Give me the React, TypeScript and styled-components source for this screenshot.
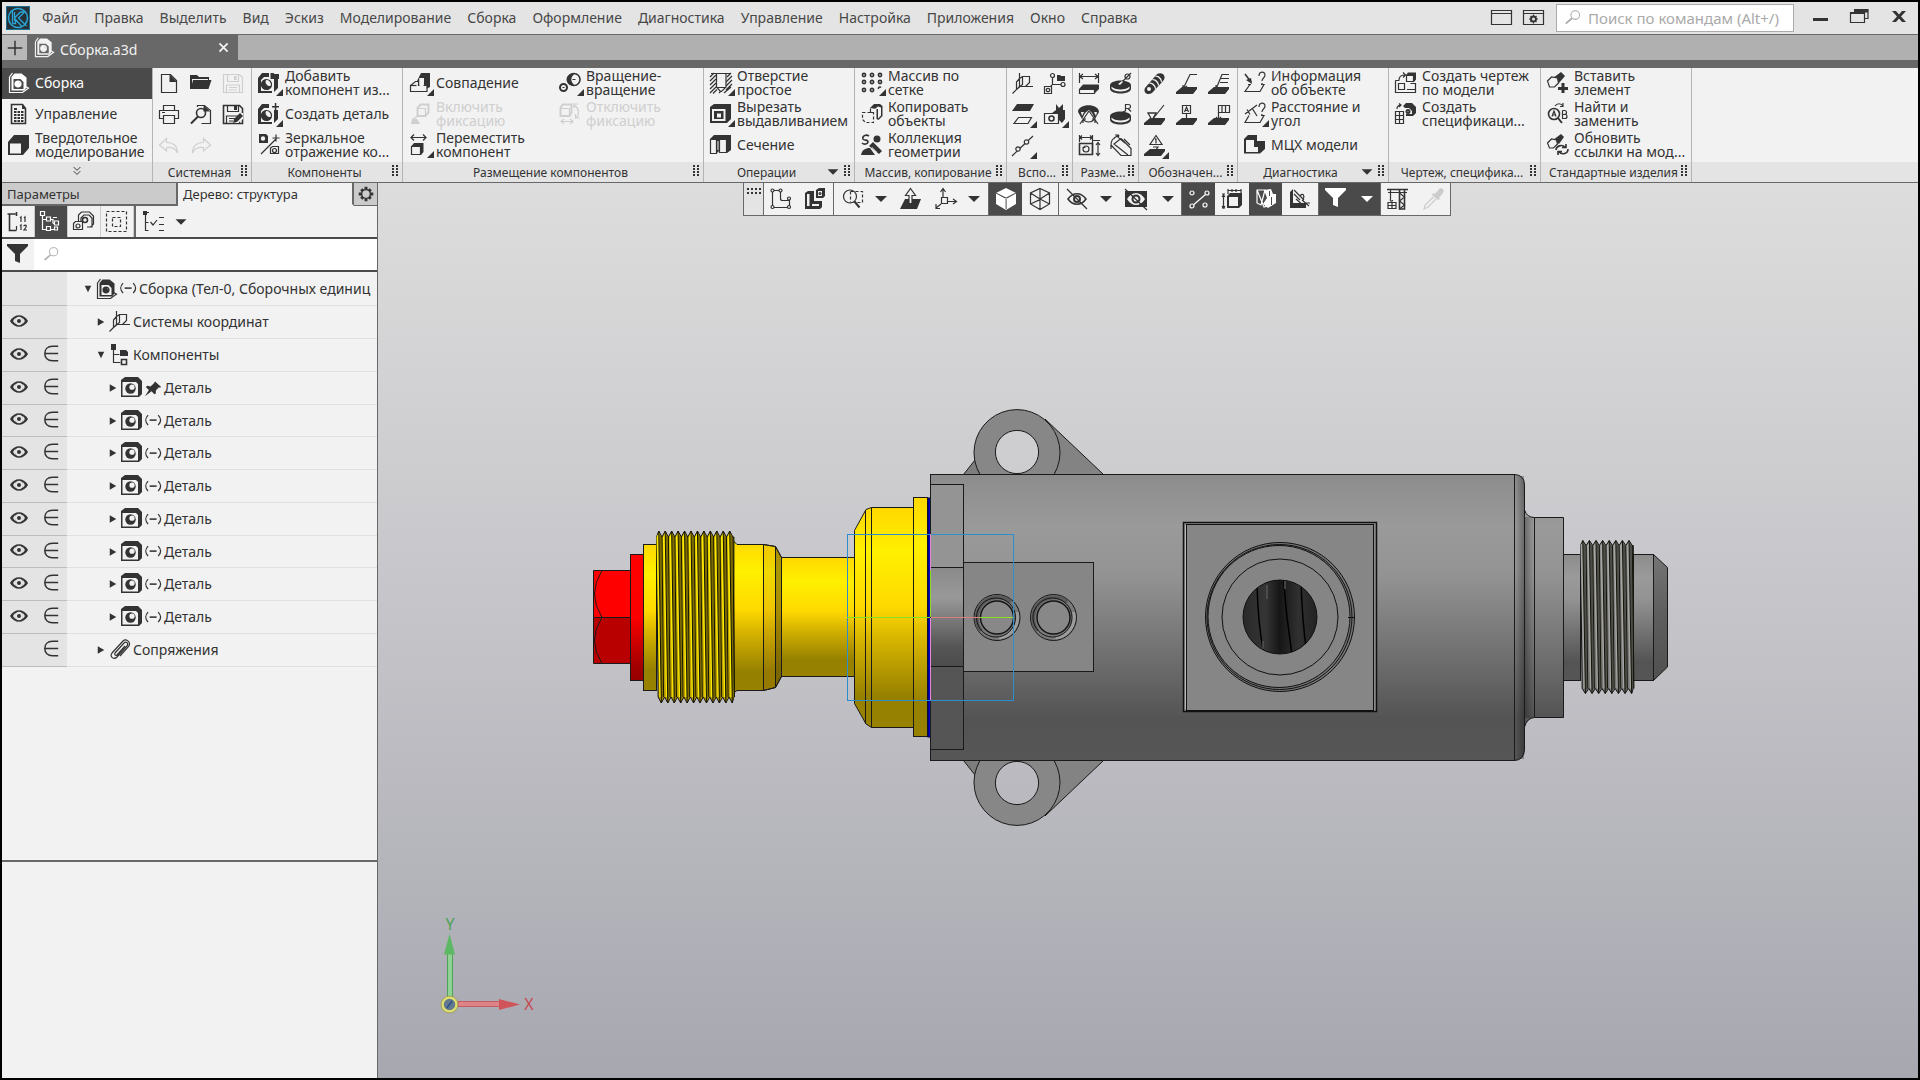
import React from 'react';
import styled, { createGlobalStyle, css } from 'styled-components';

const ink = '#333333';
const paper = '#f2f2f2';
const bar = '#e4e4e4';
const dark = '#4a4a4a';
const edge = '#686868';

const GlobalStyle = createGlobalStyle`
  *, *::before, *::after { box-sizing: border-box; }
  body {
    margin: 0;
    background: #000;
    color: ${ink};
    font: 14px/20px "Noto Sans", "Open Sans", sans-serif;
  }
  button, input { font: inherit; color: inherit; margin: 0; }
  button { border: 0; padding: 0; background: none; cursor: pointer; }
  ul { list-style: none; margin: 0; padding: 0; }
`;

/* ---------- icons ---------- */

// s: stroke, m: medium stroke, t: thick stroke, f: solid, w: knocked out, b: knocked out with outline, d: dashed
type Layer = ['s' | 'm' | 't' | 'f' | 'w' | 'b' | 'd', string];

const c = (x: number, y: number, r: number) =>
  `M${x - r} ${y}a${r} ${r} 0 1 0 ${2 * r} 0a${r} ${r} 0 1 0 ${-2 * r} 0z`;

const partBody: Layer[] = [
  ['f', 'M0 6L4 1h7v4H6L3 8v11h11v2H0z M16 7h4v9l-4 4z'],
  ['b', c(8.5, 12.5, 5)],
  ['f', 'M8.500 7.500a5 5 0 1 0 5 6a4 4 0 0 1-5-6z'],
];

const slab = 'M0 19l6-5h15v2l-4 5H0z';

const icons: Record<string, Layer[]> = {
  assembly: [
    ['s', 'M1.500 5v15.500h13l6-4.500-3-1.500'],
    ['f', 'M3.500 5l3-3.500h7l5 4v10l-2.500 3H3.500z'],
    ['w', 'M5.500 7h7l3 3v7H5.500z'],
    ['m', c(10, 12, 2.8)],
    ['f', 'M10 9a3 3 0 1 0 3 4z'],
    ['s', 'M1.500 5l3-4'],
  ],
  control: [
    ['m', 'M3.500 1.500h11l3 4v15h-14z'],
    ['f', 'M6 5h3v2H6z M6 8h2.500v2H6z M9.500 8H12v2H9.500z M13 8h2.500v2H13z M6 11h2.500v2H6z M9.500 11H12v2H9.500z M13 11h2.500v2H13z M6 14h2.500v2H6z M9.500 14H12v2H9.500z M13 14h2.500v2H13z M6 17h2.500v2H6z M9.500 17H12v2H9.500z M13 17h2.500v2H13z M14 1l4 5h-4z'],
  ],
  solid: [['f', 'M0 8L6 1h15v13l-6 7H0z'], ['w', 'M2 9.500h11v10H2z']],
  create: [['s', 'M3.500 1.500h9l6 6v12h-15z'], ['f', 'M11.500 1v8H19z']],
  open: [['f', 'M0 2h7l2 2h10v3h2.500l-3 9H0z'], ['w', 'M2 6h16v1H3l-1 4z']],
  save: [['s', 'M1.500 1.500h16l3 3v15h-19z M5.500 1.500v7h11v-7 M4.500 19v-7h13v7 M7 14.500h8 M7 17h8'], ['f', 'M12 3h2.500v4H12z']],
  saveAs: [
    ['m', 'M1.500 1.500h16l3 3v15h-19z'],
    ['s', 'M5.500 1.500v6h11v-6 M4.500 19v-7h13v7 M7 14.500h6 M7 17h4'],
    ['f', 'M12 2h3v4h-3z'],
    ['w', 'M11 18l8-9h2v6l-5 4h-5z'],
    ['f', 'M11 19l1-4 6-6 3 3-6 6z'],
  ],
  print: [['s', 'M5.500 6.500v-5h11v5 M5 14.500H1.500v-8h19v8H17 M5.500 11.500h11v8h-11z M4 8.500h3']],
  preview: [
    ['s', 'M7.500 3v-1.500h7l6 5v13h-9'],
    ['f', 'M13.500 1v6.500H20z'],
    ['m', c(11, 9, 4.5)],
    ['t', 'M8 12.500l-7 7'],
  ],
  undo: [['s', 'M8.500 3.500l-7 6.500 7 6v-3.500c6-1 9 1 11 5.500 0-7-4-10.500-11-10.500z']],
  redo: [['s', 'M13.500 3.500l7 6.500-7 6v-3.500c-6-1-9 1-11 5.500 0-7 4-10.500 11-10.500z']],
  addPart: [...partBody, ['f', 'M12.500 1h3l1 1h4.500v5h-8.500z']],
  newPart: [...partBody, ['f', 'M14 3h7v1.500h-7z M16.800 0h1.500v7h-1.500z']],
  mirror: [
    ['f', 'M1 0h7l2 2v7H1z'],
    ['w', c(5, 4.5, 2.2)],
    ['s', 'M3 20L18 5 M14.500 4h7 M18 .5v7 M12.500 14l2-1.500h6v7h-8z'],
    ['s', c(16.5, 16.5, 2)],
  ],
  coincide: [
    ['f', 'M8 9l4-8h9v14l-4 2H8z'],
    ['w', 'M10.500 6h4.500v8h-4.500z'],
    ['b', 'M1.500 19.500v-6l5-4h3v4h8.500v6z'],
    ['w', 'M10.500 6h4v8h-4z'],
    ['s', 'M1.500 13.500h6'],
  ],
  fixOn: [
    ['t', 'M8.500 5l3-3.500h8v8l-3 3.500h-8z'],
    ['s', 'M8.500 5.500h8v7 M9 13l-5 3'],
    ['f', 'M2 21l1-5h5l3 5z'],
  ],
  fixOff: [
    ['t', 'M1.500 5l2-3.500h9v8l-2 3.500h-9z'],
    ['s', 'M1.500 5.500h9v7 M2 18.500h12 M5 16l-3 2.500L5 21 M11 16l3 2.500-3 2.500 M15 2c5 3 6 9 2 13 M15 5V1h4 M21 15h-4.500v-4'],
  ],
  move: [
    ['s', 'M2 3.500h15 M5 .5L2 3.500l3 3 M14 .5l3 3-3 3 M2.500 12.500h9v8h-9z'],
    ['f', 'M2 12.500l3-3.500h9.500v9L12 21v-8.500z'],
  ],
  rotate: [
    ['m', c(15, 7.5, 6)],
    ['t', c(4.5, 15.500, 3.5)],
    ['f', 'M14 1.500a6 6 0 0 0-1 12l2-1a6 6 0 0 1 0-10z'],
    ['s', 'M13.500 7.500h3 M3.500 15.500h2'],
  ],
  hole: [
    ['s', 'M0 5l4-4 M0 9l6-6 M0 13l6-6 M0 17l6-6 M0 21l6-6 M3 21.500l4-4 M17 5l4-4 M16 10l6-6 M16 14l6-6 M16 18l6-6 M14 21l7-6 M9 21l2-2'],
    ['b', 'M6.500 1.500h9.500v13.500l-4.500 4.500h-1l-4-4.500z'],
    ['s', 'M1 1.500h20 M6.500 15.500h9.500'],
  ],
  cut: [['f', 'M0 4l4-3h17v15l-4 4H0z'], ['w', 'M2 6h13.500v12H2z'], ['f', 'M4 8h9.500v8H4z'], ['w', 'M7 10.500h4v4H7z']],
  section: [
    ['f', 'M0 5l4-4h17v15l-4 3V5z'],
    ['b', 'M.5 5.500h6v14h-6z M9.500 5.500h7v13h-7z'],
    ['f', 'M6.500 5l3.500-2v13l-3.500 3.500z'],
    ['w', 'M7.500 7h1v9h-1z'],
  ],
  array: [
    ['m', [3, 11, 19].map(x => [3, 10, 18].map(y => (x === 19 && y === 18 ? 'M17.500 17a1.500 1.500 0 0 1 2.500-1.500' : c(x, y, 1.6))).join('')).join('')],
  ],
  copy: [
    ['d', 'M1.500 9.500h11v10h-8l-3-3z'],
    ['f', 'M9 5l4-4h6l2.500 2v10l-4 4-2-1V6z'],
    ['w', 'M14 6l3-2.500 3 1v8l-3 3V6z'],
    ['s', 'M9.500 5.500v4h3'],
  ],
  collection: [
    ['m', 'M8 2c-3-2-7 0-6 3 1 2 5 0 5 3 0 2-4 3-6 1'],
    ['f', c(16, 5, 3.5)],
    ['f', 'M8 12l4-4 9 9-3 3z M0 21c1-5 4-7 9-7l5 7z'],
    ['w', 'M11 13l5 5-.5.5-5-5z'],
  ],
  csys: [['s', 'M7.500 0v13.500h13.500 M7.500 13.500L.5 20.500 M7.500 5.500l3-2h7v6l-4 4 M10.500 3.500v8l-6 5 M4.500 16.500V9l3-3.500']],
  csys2: [
    ['s', 'M8.500 4v7.500h9 M8 12l-3 3'],
    ['b', c(8.5, 2.5, 2) + c(19, 11.5, 2)],
    ['f', 'M13 2h3l1 1h4v5h-8z'],
    ['b', 'M.5 13.500h7v7h-7z'],
    ['s', c(4, 17, 1.7)],
  ],
  plane: [['f', 'M5 0h17l-4 7H0z'], ['s', 'M6.500 13.500h13l-3.500 6H2z']],
  partSolid: [
    ['f', 'M12 0l3 4 4-4v6l-4 3-3-2z M8 9l4-3h9v9l-3 4-3-3V9z'],
    ['b', 'M.5 9.500h14v10H.5z'],
    ['m', c(7.5, 14.5, 2.5)],
  ],
  points: [['s', 'M0 21L21 1'], ['b', c(6, 14, 2.2) + c(14.500, 7, 2.2)]],
  dimLinear: [['s', 'M1.500 0v10 M20.500 0v10 M2 3.500h18 M5 1L2 3.500 5 6 M17 1l3 2.500L17 6 M1.500 16.500h15v4h-15z'], ['f', 'M1 16l4-4.500h16v4.500l-4 4V16z']],
  dimDia: [['f', 'M0 12c1-6 20-6 21 0v4c-1 6-20 6-21 0z'], ['w', 'M1.500 13.500c3 4 15 4 18 0v2c-3 4-15 4-18 0z'], ['s', c(17.5, 3.5, 2.5) + ' M21 0l-7 7 M10 10l4-3'], ['w', 'M8 11l4-3 1 1-3 3z']],
  dimAng: [['f', 'M0 8c0-9 21-9 21 0l-4 7-3-6-3-3-4 3-3 6z'], ['s', 'M11 7L2 20 M11 7l9 13 M5 15c3 4 8 4 12 0 M5 19v-4h3 M17 19v-4h-3'], ['w', 'M3 8h3l-2 4z M16 8h3l-1 4z']],
  dimRad: [['f', 'M0 12c1-6 20-6 21 0v4c-1 6-20 6-21 0z'], ['w', 'M1.500 13.500c3 4 15 4 18 0v2c-3 4-15 4-18 0z'], ['s', 'M15.500 7.500v-7h3a2 2 0 0 1 0 4h-3 M18 4.500l3 3 M10 10l5-3']],
  dimAll: [['m', 'M1.500 8.500h13v11h-13z'], ['s', 'M1.500 0v7 M14.500 0v19 M2 2.500h12 M4 .5l-2 2 2 2 M12 .5l2 2-2 2 M20 8v12 M18 10l2-2.500 2 2.500 M18 18l2 2.500 2-2.500 M15 5.500h7 M4.500 12.500h3'], ['s', c(8, 14, 3)]],
  dimBox: [['s', 'M1 10L11 20.500 21 20.500v-7L11 3.500 M1 10v4 M11 3.500L4 9l14 11 M4 3l5-3 M9 0H5 M9 0L8 3 M1 10c0-4 1-6 4-7 M14 4l6 6 M15 8L9 3']],
  threadRod: [['f', 'M1 15L13 1c6-3 10 3 6 7L8 20c-5 3-9-1-7-5z'], ['w', c(5, 16, 2)], ['w', 'M5 10.500c3 0 6 3 6 6l1-1c0-3-3-6-6-6z M8 7c3 0 6 3 6 6l1-1c0-3-3-6-6-6z M11 3.500c3 0 6 3 6 6l1-1c0-3-3-6-6-6z']],
  base: [['f', slab], ['s', 'M7 16l7-14.500h7 M7 16v-4 M7 16l4-3']],
  leader: [['f', slab], ['s', 'M8 16l6-14.500h7 M13 5.500h8 M12 9.500h8 M8 16v-4']],
  rough: [['f', slab], ['b', 'M4 9l4 7 4-7z'], ['s', 'M3.500 9h9 M8 16L20 1']],
  datum: [['f', slab], ['b', 'M6.500 1.500h8v8h-8z'], ['s', 'M10.500 10v6 M7 16.500h7 M8.500 8l2-5 2 5 M9 6.500h3']],
  tolerance: [['f', slab], ['b', 'M10.500 1.500h11v7h-11z'], ['s', 'M14 1.500v7 M17.500 1.500v7 M10.500 8v8 M8 13l2.500 3 2.500-3']],
  mark: [['f', slab], ['b', 'M12 .5l6 9H6z'], ['s', 'M12 3.500v5 M11 4.500l1-1 M9 12h5l-3 4']],
  info: [['m', 'M1 2l6 8'], ['f', 'M8 12l-6-4 5-2z'], ['s', 'M6 12.500l-5 7h15l4-7h-3 M4 12.500h3 M15 4c0-5 6-5 6-1 0 3-3 3-3 6 M18 11v2']],
  distance: [['s', 'M1 11L13 2 M3 6.500l3 5 M8 5l5 8 M5 12.500l-4 7h15l4-7h-3 M15 4c0-5 6-5 6-1 0 3-3 3-3 6 M18 11v2']],
  mass: [['f', 'M0 5l4-4h9v6h8v8l-5 4.500H0z'], ['w', 'M2 6h8v7h4v5H2z']],
  drawing: [
    ['s', 'M.5 8.500h4 M.5 8.500v12h20v-9h-5 M3.500 11.500h6v6h-6z M12 17.500h8 M4 8c0-4 3-5 6-5 M8 .5l2.500 2.500L8 5.500'],
    ['f', 'M11 3l2-2.500h8v7L19 10V3z'],
    ['b', 'M11.500 3.500h7v6h-7z'],
  ],
  spec: [
    ['s', 'M.5 8.500h8v12h-8z M.5 12.500h8 M.5 16.500h8 M4.500 8.500v12 M2 6c0-3 2-4 4-4 M4 .5L6 2 4 4'],
    ['f', 'M8 3l3-3h6l4 4v6l-3 3h-7V6z'],
    ['w', 'M10 5h4l3 3v3h-7z'],
    ['t', c(13, 8.5, 1.5)],
  ],
  insert: [['f', 'M6 6l8-6 4 4-6 7z M11 15h10v3H11z M14.500 11h3v10h-3z'], ['b', 'M.5 9l4-4 6 1 1 5-4 4H2.500z']],
  find: [['m', c(7, 11, 5.5)], ['t', 'M11 15l4 5'], ['s', 'M5 13.500L7 8l2 5.500 M5.500 12h3 M15.500 7.500v8h2.500a2 2 0 0 0 0-4h-2.500 M15.500 7.500h2a2 2 0 0 1 0 4 M8 3c2-3 6-3 8 0 M16 0v3.500h-3']],
  update: [['f', 'M6 6l8-6 3 3-5 7z'], ['b', 'M.5 9l4-4 5 1 1 4-4 4H2.500z'], ['m', 'M9 16c0-4 6-6 9-3 M19 10v3.500h-4 M21 15c0 5-6 6-9 3 M11 21v-3.500h4']],
  // model tree panel
  treeNum: [['m', 'M2.500 3v16.500h7 M2.500 3h6 M2.500 3h-2 M9.500 1v4'], ['s', 'M9.500 15v4 M13 7l1-1v5 M17 7l1-1v5 M13 15l1-1v5 M16.500 15c3-2 4 0 .5 4h3']],
  tree: [['s', 'M2.500 3v15.500h5 M2.500 8.500h5 M10 8.500h3v4 M9 18.500h5 M13 6.500h4 M13 12.500h4'], ['b', 'M.5.500h4v4h-4z M6.500 6h4v4h-4z M14.500 10h4v4h-4z M6.500 15.500h4v4h-4z M14.500 16h3v3h-3z']],
  layers: [['s', 'M5.500 10V4l3-3h8l4 4v8l-3 3M8 10V7l3-3h5l3 3v9h-5'], ['m', c(12, 9, 2.500)], ['b', 'M.5 12.500l2-2h7v8h-9z'], ['s', c(5, 15, 2)]],
  bounds: [['d', 'M.5.500h20v20H.5z'], ['d', 'M6.500 6.500h8v9h-8z']],
  checklist: [['f', 'M0 0h4v4H0z'], ['s', 'M2.500 3v16.500h3 M2.500 11.500h3 M4 1.500h2 M7.500 11l2.500 3 4-5 M16 6.500h5 M16 13.500h5 M16 19.500h5']],
  funnel: [['f', 'M0 0h21v2l-8 8v9l-5-2v-7L0 2z']],
  search: [['s', c(13, 7, 5)], ['t', 'M9 11l-7 6']],
  eye: [['f', 'M1 11c5-8.500 15-8.500 20 0-5 8.500-15 8.500-20 0z'], ['w', c(11, 11, 4.6)], ['w', 'M4.500 11c1-2 2-3 3-3.500-1 2-1 5 0 7-1-.5-2-1.500-3-3.500z M17.500 11c-1-2-2-3-3-3.500 1 2 1 5 0 7 1-.5 2-1.500 3-3.500z'], ['f', c(11, 11, 2.2)]],
  member: [['m', 'M18 3.500h-6c-5 0-8 3-8 7.500s3 7.500 8 7.500h6 M4 11h14']],
  part: [['f', 'M0 3l4-3h13l4 4v13l-3 3H0z'], ['w', 'M1.500 5h13.500l2 2v11.500H1.500z'], ['f', c(9.500, 11.500, 5.200)], ['w', c(11, 10.200, 2.600)]],
  free: [['m', 'M4 4c-4 4-4 9 0 13 M17 4c4 4 4 9 0 13'], ['t', 'M6 10.500h9']],
  pin: [['f', 'M13 2l8 7-2 1-1-.5-4 4v4l-2 1-3.500-4L0 21l5-8-4-4 2-1.500 4 1 4-3.500z']],
  components: [['f', 'M2 0h5v6H2z M11 6h6v6h-6z'], ['s', 'M4.500 6v12.500h7 M4.500 10.500h6'], ['m', 'M12.500 15.500h5v5h-5z'], ['f', 'M17 6l2 2v4h-2z']],
  clip: [['s', 'M6 14L15 4c2-2 5 0 3 3L8 18c-3 3-8 0-5-4L14 2c3-3 8 1 6 5L11 17 M6 14c-1 2 1 3 2 2L16 7']],
  gear: [['t', c(11, 11, 6)], ['f', 'M9 1h4v4H9z M9 17h4v4H9z M1 9h4v4H1z M17 9h4v4h-4z M3 6L6 3l2.500 2.500L5.500 8.500z M16 3l3 3-2.500 2.500-3-3z M3 16l2.500-2.500 3 3L6 19z M16 19l-2.500-2.500 3-3L19 16z']],
  // view toolbar
  sketch: [['s', 'M2.500 2.500h8v8c0 1 1 2 2 2h7v7h-17z'], ['b', c(2.5, 2.5, 1.5) + c(10.5, 2.5, 1.5) + c(19, 10.500, 1.5) + c(2.5, 19, 1.5) + c(19, 19, 1.5)]],
  cornerPart: [['f', 'M0 5l3-2h6v10h8v6l-2 2H0z'], ['w', 'M2 6h2.500v12H2z M7 16h7v2H7z'], ['f', 'M11 2l3-2h6v8l-2 2h-7z'], ['w', 'M13 3h4v5h-4z'], ['s', c(15, 5.5, 1)]],
  zoom: [['s', c(9, 8.5, 6.5)], ['t', 'M13.500 13.500l5 6'], ['d', 'M9.500 3.500h12v11h-9 M9.500 3.500v11']],
  orient: [['f', 'M5 11h16l-4 10H0z'], ['b', 'M9 15.500V7.500H5.500L10.500.5l5 7H12v8z']],
  axes: [['s', 'M8 9V1 M5.500 4L8 .5 10.500 4 M12 13.500h9 M18 11l3.500 2.500L18 16 M6 16l-5 4 M1 16v4.500h4'], ['b', 'M6.500 9.500h6v6h-6z']],
  cube: [['f', 'M11 0l10 5v11l-10 6-10-6V5z'], ['w', 'M1 5.500l10 5.500 10-5.500v-1L11 9.500 1 4.500z M10.600 10h1v11h-1z']],
  wire: [['s', 'M11 .5l9.500 4.500v11L11 21.500 1.500 16V5z M1.500 5L11 11l9.500-6 M11 11v10 M11 .5v11L1.500 16 M11 11l9.500 5']],
  eyeOff: [['m', 'M2 11c5-7 13-7 18 0-5 7-13 7-18 0z'], ['s', 'M1 1l20 20'], ['t', c(11, 11, 3)]],
  eyeBox: [['f', 'M0 3h22v16H0z'], ['w', 'M2 11c5-8 13-8 18 0-5 8-13 8-18 0z'], ['t', c(11, 11, 3.5)], ['s', 'M0 1l22 21']],
  nodes: [['s', 'M3 19L18 6'], ['b', c(4, 5, 2) + c(19, 5, 2) + c(4, 18, 2) + c(17, 17, 2)]],
  dimShow: [['s', 'M1 6h3 M1 20h3 M2.500 7v13 M1 9l1.500-2L4 9 M1 18l1.500 2L4 18 M7 1v5 M20 1v5 M7 2.500h13 M11 1v3 M15 1v3'], ['f', 'M6 8l3-3h12v12l-3 3H6z'], ['w', 'M8 9h9v9H8z']],
  shade: [['s', 'M2 2h8L6 17l-4-2z M2 2l7 17 8-2'], ['f', 'M9 2l7-1 2 5h3v9l-8 5-5-4 4-6z'], ['w', 'M14 3h1v5h-1z M16 9h1v8h-1z']],
  texture: [['f', 'M1 4l3-3v14h13v5H1z'], ['s', 'M5 2l4 4 M5 6l6 6 M9 6l6 6 M7 11l8 7 M13 12l7 6 M11 8c3-4 5 0 3 3 M16 15h5']],
  crane: [['m', 'M0 1.500h21 M12.500 1v20h5V1'], ['s', 'M3.500 2v9c-1 2 2 3 2 1 M1 4.500h19 M12.500 5l5 4-5 4 5 4-5 4 M1 14.500h8v6H1z M1 17.500h8 M5 14v7']],
  pipette: [['f', 'M13 6l4-5c3-2 6 1 4 4l-4 5 1 1-2 1-6-5 1-2z'], ['s', 'M11.500 9L3 17l-1 4 4-2 8-8']],
  windowFrame: [['s', 'M.5 3.500h20v14H.5z M.5 6.500h20']],
  windowGear: [['s', 'M.5 3.500h20v14H.5z M.5 6.500h20'], ['t', c(10.500, 12, 2.500)], ['s', 'M10.500 7.500v9 M6 12h9 M7.500 9l6 6 M13.500 9l-6 6'], ['w', c(10.500, 12, 1.500)]],
  minimize: [['f', 'M3 12h15v3H3z']],
  restore: [['s', 'M1.500 6.500h14v10h-14z M5 3.500h14v9h-3'], ['f', 'M5 3h14v3.500H16v1.500H1.500V6H5z']],
  close: [['t', 'M6 6l9 9 M15 6l-9 9']],
  closeBold: [['f', 'M4 5h4l3 3.500L14 5h4l-5 5.500 5 5.500h-4l-3-3.500L8 16H4l5-5.500z']],
  plus: [['m', 'M11 3v16 M3 11h16']],
  down: [['f', 'M5 8h12l-6 6z']],
  chevrons: [['s', 'M7 5l4 4 4-4 M7 10l4 4 4-4']],
  caretDown: [['f', 'M7 7h8l-4 8z']],
  caretRight: [['f', 'M7 6.500v9l8-4.500z']],
};

const Glyph = styled.svg<{ $size: number }>`
  flex: none;
  display: block;
  width: ${p => p.$size}px;
  height: ${p => p.$size}px;
  overflow: visible;
`;

const strokeOf = { s: 1.2, d: 1.2, b: 1.2, m: 1.6, t: 2, f: 0, w: 0 };

function Icon({ name, size = 22, back = paper, menu = false }: { name: string; size?: number; back?: string; menu?: boolean }) {
  return (
    <Glyph $size={size} viewBox="0 0 22 22" aria-hidden="true">
      {icons[name].map(([kind, d], i) => (
        <path
          key={i}
          d={d}
          fill={kind === 'f' ? 'currentColor' : kind === 'w' || kind === 'b' ? back : 'none'}
          stroke={kind === 'f' || kind === 'w' ? 'none' : 'currentColor'}
          strokeWidth={strokeOf[kind]}
          strokeDasharray={kind === 'd' ? '3 2' : undefined}
        />
      ))}
      {menu && <path d="M25 17v7h-7z" fill="currentColor" />}
    </Glyph>
  );
}

/* ---------- window frame ---------- */

const Shell = styled.div`
  display: flex;
  flex-direction: column;
  height: 100vh;
  border: 2px solid #000;
  background: ${paper};
  overflow: hidden;
`;

const MenuBar = styled.header`
  display: flex;
  align-items: center;
  height: 33px;
  padding-left: 4px;
  background: ${bar};
  border-bottom: 1px solid ${edge};
`;

const Logo = styled.svg`
  width: 24px;
  height: 24px;
  margin-right: 4px;
`;

const Menu = styled.nav`
  display: flex;
  flex: 1;
`;

const MenuItem = styled.button`
  padding: 0 8px;
  color: #484848;
  white-space: nowrap;
`;

const FrameTools = styled.div`
  display: flex;
  gap: 10px;
  margin-right: 11px;
`;

const CommandSearch = styled.label`
  display: flex;
  align-items: center;
  gap: 5px;
  width: 238px;
  height: 28px;
  padding: 0 7px;
  color: #aaa;
  background: #fff;
  border: 1px solid #aaa;
  font-size: 15px;
`;

const SearchBox = styled.input`
  flex: 1;
  min-width: 0;
  padding: 0;
  border: 0;
  outline: 0;
  background: none;
  color: ${ink};
  &::placeholder { color: #aaa; opacity: 1; }
`;

const WindowButtons = styled.div`
  display: flex;
  gap: 17px;
  margin: 0 8px 0 16px;
  padding-bottom: 2px;
`;

const TabBar = styled.div`
  display: flex;
  height: 33px;
  background: #b0b0b0;
  border-bottom: 8px solid ${edge};
`;

const NewTab = styled.button`
  display: grid;
  place-items: center;
  width: 25px;
  background: #b8b8b8;
`;

const DocTab = styled.div`
  display: flex;
  align-items: center;
  gap: 5px;
  width: 211px;
  padding: 0 4px 0 7px;
  color: #f2f2f2;
  background: ${edge};
`;

const DocName = styled.span`
  flex: 1;
  padding-top: 5px;
`;

/* ---------- ribbon ---------- */

const Ribbon = styled.div`
  display: flex;
  height: 115px;
  background: linear-gradient(${paper} 94px, ${bar} 94px);
  border-bottom: 1px solid ${edge};
`;

const Group = styled.section<{ $width: number }>`
  display: flex;
  flex-direction: column;
  width: ${p => p.$width}px;
  border-right: 1px solid #b4b4b4;
`;

const Commands = styled.div<{ $column: number }>`
  display: grid;
  grid-auto-flow: column;
  grid-template-rows: repeat(3, 31px);
  grid-auto-columns: ${p => p.$column}px;
  height: 94px;
`;

const command = css<{ disabled?: boolean }>`
  display: flex;
  align-items: center;
  color: ${p => (p.disabled ? '#cfcfcf' : ink)};
`;

const labelled = css`
  ${command}
  gap: 5px;
  padding: 0 0 1px 6px;
  text-align: left;
  line-height: 14px;
  white-space: pre;
`;

const Command = styled.button`
  ${labelled}
`;

const SmallCommand = styled.button`
  ${command}
  justify-content: center;
`;

const Mode = styled.button<{ $active?: boolean }>`
  ${labelled}
  ${p => p.$active && css`color: #fff; background: ${dark};`}
`;

const GroupName = styled.footer`
  display: flex;
  align-items: center;
  height: 20px;
  padding: 0 3px 0 6px;
  font-size: 12px;
`;

const GroupTitle = styled.span`
  flex: 1;
  padding-top: 2px;
  text-align: center;
  white-space: nowrap;
`;

const Expand = styled.button`
  display: grid;
  place-items: center;
  height: 20px;
`;

const Grip = styled.svg<{ $wide?: boolean }>`
  display: block;
  flex: none;
  width: ${p => (p.$wide ? 14 : 8)}px;
  height: ${p => (p.$wide ? 8 : 14)}px;
`;

function Dots({ wide = false }: { wide?: boolean }) {
  const cols = wide ? 4 : 2;
  const rows = wide ? 2 : 4;
  return (
    <Grip $wide={wide} viewBox={wide ? '0 0 14 8' : '0 0 8 14'} aria-hidden="true">
      {Array.from({ length: cols * rows }, (_, i) => (
        <rect key={i} x={(wide ? 0 : 1) + (i % cols) * 4} y={Math.floor(i / cols) * (wide ? 4 : 3)} width="2" height="2" fill={ink} />
      ))}
    </Grip>
  );
}

type Cmd = { icon: string; text?: string; hint?: string; menu?: boolean; off?: boolean };
type RibbonGroup = { title: string; width: number; column: number; more?: boolean; items: Cmd[] };

const groups: RibbonGroup[] = [
  {
    title: 'Системная', width: 99, column: 32,
    items: [
      { icon: 'create', hint: 'Создать' }, { icon: 'print', hint: 'Печать' }, { icon: 'undo', hint: 'Отменить', off: true },
      { icon: 'open', hint: 'Открыть' }, { icon: 'preview', hint: 'Предварительный просмотр' }, { icon: 'redo', hint: 'Повторить', off: true },
      { icon: 'save', hint: 'Сохранить', off: true }, { icon: 'saveAs', hint: 'Сохранить как' },
    ],
  },
  {
    title: 'Компоненты', width: 151, column: 150,
    items: [
      { icon: 'addPart', text: 'Добавить\nкомпонент из...', menu: true },
      { icon: 'newPart', text: 'Создать деталь', menu: true },
      { icon: 'mirror', text: 'Зеркальное\nотражение ко...' },
    ],
  },
  {
    title: 'Размещение компонентов', width: 301, column: 150,
    items: [
      { icon: 'coincide', text: 'Совпадение', menu: true },
      { icon: 'fixOn', text: 'Включить\nфиксацию', off: true },
      { icon: 'move', text: 'Переместить\nкомпонент', menu: true },
      { icon: 'rotate', text: 'Вращение-\nвращение', menu: true },
      { icon: 'fixOff', text: 'Отключить\nфиксацию', off: true },
    ],
  },
  {
    title: 'Операции', width: 151, column: 150, more: true,
    items: [
      { icon: 'hole', text: 'Отверстие\nпростое', menu: true },
      { icon: 'cut', text: 'Вырезать\nвыдавливанием', menu: true },
      { icon: 'section', text: 'Сечение' },
    ],
  },
  {
    title: 'Массив, копирование', width: 152, column: 150,
    items: [
      { icon: 'array', text: 'Массив по\nсетке', menu: true },
      { icon: 'copy', text: 'Копировать\nобъекты' },
      { icon: 'collection', text: 'Коллекция\nгеометрии' },
    ],
  },
  {
    title: 'Вспо...', width: 66, column: 32,
    items: [
      { icon: 'csys', hint: 'Система координат' }, { icon: 'plane', hint: 'Плоскость', menu: true }, { icon: 'points', hint: 'Точки', menu: true },
      { icon: 'csys2', hint: 'Система координат детали' }, { icon: 'partSolid', hint: 'Контур', menu: true },
    ],
  },
  {
    title: 'Разме...', width: 66, column: 32,
    items: [
      { icon: 'dimLinear', hint: 'Линейный размер' }, { icon: 'dimAng', hint: 'Угловой размер' }, { icon: 'dimAll', hint: 'Авторазмер' },
      { icon: 'dimDia', hint: 'Диаметр' }, { icon: 'dimRad', hint: 'Радиус' }, { icon: 'dimBox', hint: 'Габарит' },
    ],
  },
  {
    title: 'Обозначен...', width: 99, column: 32,
    items: [
      { icon: 'threadRod', hint: 'Резьба' }, { icon: 'rough', hint: 'Шероховатость' }, { icon: 'mark', hint: 'Обозначение позиции', menu: true },
      { icon: 'base', hint: 'Линия-выноска' }, { icon: 'datum', hint: 'База' }, { icon: '', hint: '' },
      { icon: 'leader', hint: 'Выноска' }, { icon: 'tolerance', hint: 'Допуск формы' },
    ],
  },
  {
    title: 'Диагностика', width: 151, column: 150, more: true,
    items: [
      { icon: 'info', text: 'Информация\nоб объекте' },
      { icon: 'distance', text: 'Расстояние и\nугол', menu: true },
      { icon: 'mass', text: 'МЦХ модели' },
    ],
  },
  {
    title: 'Чертеж, специфика...', width: 152, column: 150,
    items: [
      { icon: 'drawing', text: 'Создать чертеж\nпо модели' },
      { icon: 'spec', text: 'Создать\nспецификаци...' },
    ],
  },
  {
    title: 'Стандартные изделия', width: 151, column: 150,
    items: [
      { icon: 'insert', text: 'Вставить\nэлемент' },
      { icon: 'find', text: 'Найти и\nзаменить' },
      { icon: 'update', text: 'Обновить\nссылки на мод...' },
    ],
  },
];

/* ---------- side panel ---------- */

const Workspace = styled.div`
  display: flex;
  flex: 1;
  min-height: 0;
`;

const Side = styled.aside`
  display: flex;
  flex-direction: column;
  width: 376px;
  border-right: 1px solid ${edge};
`;

const PanelTabs = styled.div`
  display: flex;
  height: 23px;
`;

const PanelTab = styled.button<{ $active?: boolean }>`
  width: 176px;
  padding: 0 5px;
  text-align: left;
  font-size: 13px;
  border-right: 2px solid ${edge};
  border-bottom: 2px solid ${p => (p.$active ? paper : edge)};
  background: ${p => (p.$active ? paper : '#cbcbcb')};
`;

const PanelGear = styled.button`
  display: grid;
  flex: 1;
  place-items: center;
  background: #cbcbcb;
  border-bottom: 1px solid ${edge};
`;

const PanelTools = styled.div`
  display: flex;
  height: 33px;
  border-bottom: 2px solid ${dark};
`;

const PanelTool = styled.button<{ $active?: boolean }>`
  display: grid;
  place-items: center;
  width: 33px;
  border-right: 1px solid #cbcbcb;
  ${p => p.$active && css`color: #fff; background: ${dark};`}
`;

const ListTool = styled.button`
  display: flex;
  align-items: center;
  gap: 6px;
  padding-left: 7px;
  border-left: 2px solid ${edge};
`;

const FilterRow = styled.div`
  display: flex;
  height: 33px;
  border-bottom: 2px solid ${dark};
`;

const FilterButton = styled.button`
  display: grid;
  place-items: center;
  width: 32px;
`;

const FilterField = styled.label`
  display: flex;
  flex: 1;
  align-items: center;
  gap: 6px;
  padding-left: 9px;
  color: #aaa;
  background: #fff;
`;

const TreeArea = styled.div`
  flex: 1;
  min-height: 0;
  overflow: hidden;
`;

const TreeRow = styled.li`
  display: flex;
  height: 33px;
  &:nth-child(4n + 1) { height: 32px; }
  &:first-child { height: 34px; }
`;

const FlagCell = styled.button`
  display: grid;
  place-items: center;
  width: 33px;
  padding-bottom: 3px;
  background: ${bar};
  border-bottom: 1px solid #bdbdbd;
  & + & { width: 32px; }
`;

const Node = styled.div<{ $indent: number }>`
  display: flex;
  flex: 1;
  align-items: center;
  min-width: 0;
  gap: 2px;
  padding-left: ${p => p.$indent}px;
  border-bottom: 1px solid #e0e0e0;
  white-space: nowrap;
  overflow: hidden;
`;

const Toggle = styled.button`
  display: grid;
  flex: none;
  place-items: center;
  width: 15px;
`;

const NodeName = styled.span``;

const Messages = styled.div`
  height: 218px;
  border-top: 2px solid ${edge};
  background: ${paper};
`;

type TreeNode = { name: string; level: number; icon: string; open?: boolean; mark?: string; eye?: boolean; member?: boolean };

const parts: TreeNode[] = Array.from({ length: 8 }, (_, i) => ({
  name: 'Деталь', level: 2, icon: 'part', mark: i === 0 ? 'pin' : 'free', eye: true, member: true,
}));

const tree: TreeNode[] = [
  { name: 'Сборка (Тел-0, Сборочных единиц', level: 0, icon: 'assembly', open: true, mark: 'free' },
  { name: 'Системы координат', level: 1, icon: 'csys', eye: true },
  { name: 'Компоненты', level: 1, icon: 'components', open: true, eye: true, member: true },
  ...parts,
  { name: 'Сопряжения', level: 1, icon: 'clip', member: true },
];

const indents = [12, 25, 37];

/* ---------- model view ---------- */

const View = styled.main`
  position: relative;
  flex: 1;
  min-width: 0;
  background: linear-gradient(#dddddd, #c8c8cc 42%, #a7a7b0);
`;

const Scene = styled.svg`
  display: block;
  width: 100%;
  height: 100%;
`;

const ViewTools = styled.div`
  position: absolute;
  top: 0;
  left: 365px;
  display: flex;
  height: 33px;
  border: 1px solid ${edge};
  border-top: 0;
  background: ${paper};
`;

const ToolSet = styled.div`
  display: flex;
  border-left: 1px solid ${edge};
  &:first-child { border-left: 0; }
`;

const GripCell = styled.div`
  width: 19px;
  padding: 5px 0 0 3px;
  background: ${bar};
`;

const Tool = styled.button<{ $width: number; $active?: boolean }>`
  display: grid;
  place-items: center;
  width: ${p => p.$width}px;
  ${p => p.$active && css`color: #fff; background: ${dark};`}
  ${p => p.disabled && css`color: #ccc;`}
`;

type ViewTool = { icon: string; width: number; hint: string; on?: boolean; off?: boolean };

const toolSets: ViewTool[][] = [
  [{ icon: 'sketch', width: 34, hint: 'Эскиз' }, { icon: 'cornerPart', width: 35, hint: 'Деталь' }],
  [
    { icon: 'zoom', width: 36, hint: 'Масштаб рамкой' }, { icon: 'down', width: 20, hint: 'Масштаб: список' },
    { icon: 'orient', width: 42, hint: 'Нормально к' }, { icon: 'axes', width: 28, hint: 'Ориентация' }, { icon: 'down', width: 28, hint: 'Ориентация: список' },
  ],
  [{ icon: 'cube', width: 33, hint: 'Полутоновое', on: true }, { icon: 'wire', width: 36, hint: 'Каркас' }],
  [
    { icon: 'eyeOff', width: 36, hint: 'Скрыть' }, { icon: 'down', width: 22, hint: 'Скрыть: список' },
    { icon: 'eyeBox', width: 38, hint: 'Скрыть все' }, { icon: 'down', width: 26, hint: 'Скрыть все: список' },
  ],
  [
    { icon: 'nodes', width: 33, hint: 'Точки', on: true }, { icon: 'dimShow', width: 34, hint: 'Размеры' },
    { icon: 'shade', width: 33, hint: 'Упрощение', on: true }, { icon: 'texture', width: 36, hint: 'Текстура' },
  ],
  [{ icon: 'funnel', width: 34, hint: 'Фильтр', on: true }, { icon: 'down', width: 27, hint: 'Фильтр: список', on: true }],
  [{ icon: 'crane', width: 34, hint: 'Управление сборкой' }, { icon: 'pipette', width: 35, hint: 'Пипетка', off: true }],
];

const Axis = styled.text`
  font: 16px/20px "Noto Sans", "Open Sans", sans-serif;
  text-anchor: middle;
`;

function Thread({ x, count, pitch, top, bottom, depth, light, mid, shade }: {
  x: number; count: number; pitch: number; top: number; bottom: number; depth: number; light: string; mid: string; shade: string;
}) {
  const end = x + count * pitch;
  let outline = `M${x} ${top + depth}`;
  for (let i = 0; i < count; i++) outline += `L${x + (i + 0.35) * pitch} ${top}L${x + (i + 0.85) * pitch} ${top + depth}`;
  outline += `L${end} ${top + depth}L${end} ${bottom - depth}`;
  for (let i = count - 1; i >= 0; i--) outline += `L${x + (i + 0.75) * pitch} ${bottom}L${x + (i + 0.25) * pitch} ${bottom - depth}`;
  outline += 'Z';
  return (
    <g>
      <path d={outline} fill={mid} stroke="#111" />
      {Array.from({ length: count }, (_, i) => {
        const a = x + i * pitch;
        return (
          <g key={i}>
            <path d={`M${a} ${top + depth}L${a + pitch * 0.35} ${top + 2}L${a + pitch * 0.7} ${bottom - depth}H${a + pitch * 0.45}Z`} fill={light} />
            <path d={`M${a + pitch * 0.4} ${top + 3}L${a + pitch * 0.75} ${top + depth}L${a + pitch} ${bottom - depth}L${a + pitch * 0.75} ${bottom - 2}Z`} fill={shade} />
            <path d={`M${a + pitch * 0.35} ${top}L${a + pitch * 0.75} ${bottom} M${a + pitch * 0.85} ${top + depth}L${a + pitch * 1.1} ${bottom - depth}`} fill="none" stroke="#151505" strokeWidth="1" />
          </g>
        );
      })}
    </g>
  );
}

const Stops = ({ list }: { list: [number, string][] }) => (
  <>{list.map(([o, color]) => <stop key={o} offset={o} stopColor={color} />)}</>
);

const steel: [number, string][] = [[0, '#8c8c8c'], [0.18, '#9a9a9a'], [0.35, '#939393'], [0.55, '#7a7a7a'], [0.85, '#545454'], [1, '#565656']];
const brass: [number, string][] = [[0, '#ffd800'], [0.2, '#fff000'], [0.45, '#ffd900'], [0.6, '#d6b400'], [0.86, '#968000'], [1, '#988200']];

function Ear({ flip = false }: { flip?: boolean }) {
  return (
    <g transform={flip ? 'matrix(1 0 0 -1 0 1235)' : undefined} stroke="#1a1a1a">
      <path d="M963.500 474.500L975 460 980 474.500Z" fill="#7d7d7d" />
      <path d="M1045 419L1103.500 474.500H1054Q1066 446 1045 419Z" fill="#838383" />
      <path
        d="M980 474.500A43 43 0 1 1 1054 474.500Z M995.400 452a21.600 21.600 0 1 0 43.200 0a21.600 21.600 0 1 0-43.200 0Z"
        fill="#878787" fillRule="evenodd"
      />
    </g>
  );
}

function Bolt({ x }: { x: number }) {
  return (
    <g fill="none" stroke="#151515">
      <circle cx={x} cy="617.500" r="23" fill="#7b7b7b" />
      <path d={`M${x - 16} 631A21 21 0 0 1 ${x + 14} 602`} stroke="#5a5a5a" strokeWidth="4" />
      <path d={`M${x + 20} 612A21 21 0 0 1 ${x + 2} 638`} stroke="#9d9d9d" strokeWidth="3" />
      <circle cx={x - 1} cy="617.500" r="19.500" />
      <circle cx={x} cy="617.500" r="16.500" fill="#888" strokeWidth="1.500" />
    </g>
  );
}

function Model() {
  return (
    <Scene viewBox="378 183 1540 895" role="img" aria-label="Модель сборки, вид спереди">
      <defs>
        <linearGradient id="steel" x2="0" y2="1"><Stops list={steel} /></linearGradient>
        <linearGradient id="brass" x2="0" y2="1"><Stops list={brass} /></linearGradient>
        <linearGradient id="flangeRed" x2="0" y2="1"><Stops list={[[0, '#ff0000'], [0.5, '#fb0000'], [0.9, '#a00000'], [1, '#980000']]} /></linearGradient>
        <linearGradient id="cone" x2="0" y2="1"><Stops list={[[0, '#757575'], [0.5, '#5d5d5d'], [1, '#505050']]} /></linearGradient>
        <linearGradient id="hub" x2="0" y2="1"><Stops list={[[0, '#8a8a8a'], [0.3, '#999999'], [0.8, '#555555'], [1, '#4c4c4c']]} /></linearGradient>
        <linearGradient id="edgeShade"><Stops list={[[0, 'rgba(0,0,0,0)'], [1, 'rgba(0,0,0,.3)']]} /></linearGradient>
        <linearGradient id="bore"><Stops list={[[0, '#292929'], [0.3, '#353535'], [0.5, '#161616'], [0.75, '#303030'], [1, '#222222']]} /></linearGradient>
        <clipPath id="boreClip"><circle cx="1280" cy="617" r="37" /></clipPath>
      </defs>

      <g stroke="#1a1a1a">
        <path d="M593.500 570.500H630.500V617.500H593.500Z" fill="#ff0000" />
        <path d="M593.500 617.500H630.500V663.500H593.500Z" fill="#b80000" />
        <path d="M602 570.500Q587 594 602 617.500Q587 640 602 663.500" fill="none" />
        <rect x="630.500" y="554.500" width="13" height="126" fill="url(#flangeRed)" />
        <rect x="643.500" y="544.500" width="13" height="146" fill="url(#brass)" />
        <path d="M733.500 541L737 544.500H763.500L775.500 546.500 781.500 557.500V676.500L775.500 687.500 763.500 690.500H737L733.500 693Z" fill="url(#brass)" />
        <path d="M763.500 544.500L775.500 546.500V687.500L763.500 690.500Z" fill="rgba(150,90,0,.15)" />
        <path d="M775.500 546.500L781.500 557.500V676.500L775.500 687.500Z" fill="rgba(100,80,0,.55)" />
        <rect x="781.500" y="557.500" width="73" height="119" fill="url(#brass)" />
        <path d="M854.500 530.500L866 509.500 871.500 507.500H913.500V727.500H871.500L866 724 854.500 703.500Z" fill="url(#brass)" />
        <path d="M865.500 510V723 M871.500 507.500V727.500" fill="none" />
        <rect x="913.500" y="497.500" width="14" height="239" fill="url(#brass)" />
        <rect x="928" y="498" width="3" height="239" fill="#0000c8" stroke="#000044" />
      </g>
      <Thread x={656.5} count={12} pitch={6.45} top={531} bottom={703} depth={6} light="#fbe800" mid="#b89e00" shade="#7a6a00" />

      <Ear />
      <Ear flip />

      <g stroke="#1a1a1a">
        <path d="M1514.500 474.500Q1524.500 475 1524.500 485V510Q1527 517.500 1534.500 517.500H1563.500V717.500H1534.500Q1527 718 1524.500 727V750Q1524 760 1514.500 760.500Z" fill="url(#steel)" />
        <rect x="1515" y="476" width="9" height="283" fill="url(#edgeShade)" stroke="none" />
        <rect x="1525" y="517" width="9" height="201" fill="url(#edgeShade)" stroke="none" transform="matrix(-1 0 0 1 3059 0)" />
        <path d="M1524.500 485V750 M1534.500 517.500V717.500" fill="none" />
        <rect x="930.500" y="474.500" width="584" height="286" fill="url(#steel)" />
        <rect x="930.500" y="484.500" width="33" height="83" fill="#949494" />
        <rect x="930.500" y="567.500" width="33" height="99" fill="url(#hub)" />
        <rect x="930.500" y="666.500" width="33" height="83" fill="#555555" />
        <rect x="963.500" y="562.500" width="130" height="109" fill="#868686" />
        <rect x="1563.500" y="554.500" width="17" height="126" fill="url(#steel)" />
        <rect x="1633.500" y="554.500" width="20" height="126" fill="url(#steel)" />
        <path d="M1653.500 554.500L1667.500 567.500V667L1653.500 680.500Z" fill="url(#cone)" />
      </g>
      <Thread x={1580.5} count={8} pitch={6.6} top={540.5} bottom={693.5} depth={5} light="#a4a4a4" mid="#757575" shade="#4c4c4c" />
      <Bolt x={997} />
      <Bolt x={1053.5} />

      <g fill="none" stroke="#111">
        <rect x="1183.500" y="522.500" width="193" height="189" fill="#8a8a8a" strokeWidth="1.500" />
        <path d="M1185.500 525V709" stroke="#bcbcbc" />
        <rect x="1186.500" y="524.500" width="187" height="186" fill="#868686" />
        <circle cx="1280" cy="617" r="74.500" fill="#747474" />
        <path d="M1213 595A71 71 0 0 1 1268 546" stroke="#b2b2b2" strokeWidth="2" />
        <circle cx="1279" cy="616.500" r="71" fill="#858585" />
        <circle cx="1279.500" cy="617" r="72.500" />
        <path d="M1354 617.500h-6" />
        <circle cx="1280" cy="617" r="58" />
        <circle cx="1280" cy="617" r="37" fill="url(#bore)" />
        <g clipPath="url(#boreClip)" stroke="#000" strokeWidth="1.500">
          <path d="M1257 575Q1257 620 1264 655 M1283 575Q1286 615 1292 655 M1301 580Q1302 620 1307 655" />
          <path d="M1285 581v8 M1263 641v8 M1267 585v14" stroke="#555" />
        </g>
      </g>

      <g fill="none">
        <rect x="847.500" y="534.500" width="166" height="166" stroke="#2b8fce" />
        <path d="M847 617.500H930 M980 617.500H1013 M930.500 570V617" stroke="#8ae01c" />
        <path d="M931 617.500H980" stroke="#d9827c" />
        <path d="M930.500 534V570 M930.500 618V700" stroke="#e884d8" />
      </g>

      <g>
        <path d="M447.500 953H452.500V997H447.500Z" fill="#8fd394" stroke="#4fa258" />
        <path d="M449.500 934L455 954.500H444Z" fill="#5cb863" />
        <path d="M458 1001.500H500V1006.500H458Z" fill="#de8388" stroke="#c45b60" />
        <path d="M520 1004.500L499 1010V999Z" fill="#d0555b" />
        <circle cx="449.500" cy="1004.500" r="7" fill="#62798f" stroke="#e0df70" strokeWidth="2.500" />
        <circle cx="449.500" cy="1004.500" r="8.500" fill="none" stroke="#9a9a48" strokeWidth="0.800" />
        <path d="M447 1008L452 1001" stroke="#2d4f8c" strokeWidth="1.500" />
        <Axis x="450" y="930" fill="#4fa258">Y</Axis>
        <Axis x="529" y="1010" fill="#c9484e">X</Axis>
      </g>
    </Scene>
  );
}

const menu = [
  'Файл', 'Правка', 'Выделить', 'Вид', 'Эскиз', 'Моделирование', 'Сборка', 'Оформление',
  'Диагностика', 'Управление', 'Настройка', 'Приложения', 'Окно', 'Справка',
];

export default function App() {
  return (
    <>
      <GlobalStyle />
      <Shell>
        <MenuBar>
          <Logo viewBox="0 0 24 24" aria-hidden="true">
            <rect width="24" height="24" fill="#263238" />
            <rect x=".5" y=".5" width="23" height="23" fill="none" stroke="#1d6f8f" />
            <circle cx="12" cy="12" r="9.500" fill="none" stroke="#2ba4d6" strokeWidth="1.500" />
            <path d="M8.500 6v9 M6.500 4.500v13 M8.500 12l6-6h4l-6 6 8 8 M6.500 17.500h3v-4l6 6.500" fill="none" stroke="#2ba4d6" strokeWidth="1.300" />
          </Logo>
          <Menu>{menu.map(m => <MenuItem key={m}>{m}</MenuItem>)}</Menu>
          <FrameTools>
            <button aria-label="Окно"><Icon name="windowFrame" back={bar} /></button>
            <button aria-label="Настройка окна"><Icon name="windowGear" back={bar} /></button>
          </FrameTools>
          <CommandSearch>
            <Icon name="search" size={19} back="#fff" />
            <SearchBox aria-label="Поиск по командам" placeholder="Поиск по командам (Alt+/)" />
          </CommandSearch>
          <WindowButtons>
            <button aria-label="Свернуть"><Icon name="minimize" /></button>
            <button aria-label="Восстановить"><Icon name="restore" back={bar} /></button>
            <button aria-label="Закрыть"><Icon name="closeBold" /></button>
          </WindowButtons>
        </MenuBar>

        <TabBar>
          <NewTab aria-label="Новая вкладка"><Icon name="plus" size={20} /></NewTab>
          <DocTab>
            <Icon name="assembly" size={21} back={edge} />
            <DocName>Сборка.a3d</DocName>
            <button aria-label="Закрыть вкладку"><Icon name="close" size={20} /></button>
          </DocTab>
        </TabBar>

        <Ribbon>
          <Group $width={151}>
            <Commands $column={150}>
              <Mode $active><Icon name="assembly" back={dark} />Сборка</Mode>
              <Mode><Icon name="control" />Управление</Mode>
              <Mode><Icon name="solid" />{'Твердотельное\nмоделирование'}</Mode>
            </Commands>
            <Expand aria-label="Развернуть"><Icon name="chevrons" size={18} /></Expand>
          </Group>
          {groups.map(g => (
            <Group key={g.title} $width={g.width}>
              <Commands $column={g.column}>
                {g.items.map((item, i) =>
                  item.text ? (
                    <Command key={i} disabled={item.off}>
                      <Icon name={item.icon} menu={item.menu} />
                      {item.text}
                    </Command>
                  ) : item.icon ? (
                    <SmallCommand key={i} disabled={item.off} aria-label={item.hint}>
                      <Icon name={item.icon} menu={item.menu} />
                    </SmallCommand>
                  ) : <span key={i} />,
                )}
              </Commands>
              <GroupName>
                <GroupTitle>{g.title}</GroupTitle>
                {g.more && <button aria-label={`${g.title}: ещё`}><Icon name="down" size={20} /></button>}
                <Dots />
              </GroupName>
            </Group>
          ))}
        </Ribbon>

        <Workspace>
          <Side>
            <PanelTabs>
              <PanelTab>Параметры</PanelTab>
              <PanelTab $active>Дерево: структура</PanelTab>
              <PanelGear aria-label="Настройка панели"><Icon name="gear" size={16} back="#cbcbcb" /></PanelGear>
            </PanelTabs>
            <PanelTools>
              <PanelTool aria-label="Последовательность"><Icon name="treeNum" /></PanelTool>
              <PanelTool $active aria-label="Структура"><Icon name="tree" back={dark} /></PanelTool>
              <PanelTool aria-label="Слои"><Icon name="layers" /></PanelTool>
              <PanelTool aria-label="Зоны"><Icon name="bounds" /></PanelTool>
              <ListTool aria-label="Состав дерева"><Icon name="checklist" /><Icon name="down" size={20} /></ListTool>
            </PanelTools>
            <FilterRow>
              <FilterButton aria-label="Фильтр"><Icon name="funnel" /></FilterButton>
              <FilterField>
                <Icon name="search" size={18} back="#fff" />
                <SearchBox aria-label="Поиск в дереве" />
              </FilterField>
            </FilterRow>
            <TreeArea>
              <ul>
                {tree.map((n, i) => (
                  <TreeRow key={i}>
                    <FlagCell aria-label="Видимость">{n.eye && <Icon name="eye" size={20} back={bar} />}</FlagCell>
                    <FlagCell aria-label="Включение">{n.member && <Icon name="member" size={21} />}</FlagCell>
                    <Node $indent={indents[n.level]}>
                      <Toggle aria-label="Раскрыть"><Icon name={n.open ? 'caretDown' : 'caretRight'} size={18} /></Toggle>
                      <Icon name={n.icon} />
                      {n.mark && <Icon name={n.mark} size={17} />}
                      <NodeName>{n.name}</NodeName>
                    </Node>
                  </TreeRow>
                ))}
              </ul>
            </TreeArea>
            <Messages />
          </Side>

          <View>
            <Model />
            <ViewTools>
              <GripCell><Dots wide /></GripCell>
              {toolSets.map((set, i) => (
                <ToolSet key={i}>
                  {set.map(t => (
                    <Tool key={t.hint} $width={t.width} $active={t.on} disabled={t.off} aria-label={t.hint}>
                      <Icon name={t.icon} back={t.on ? dark : paper} />
                    </Tool>
                  ))}
                </ToolSet>
              ))}
            </ViewTools>
          </View>
        </Workspace>
      </Shell>
    </>
  );
}
